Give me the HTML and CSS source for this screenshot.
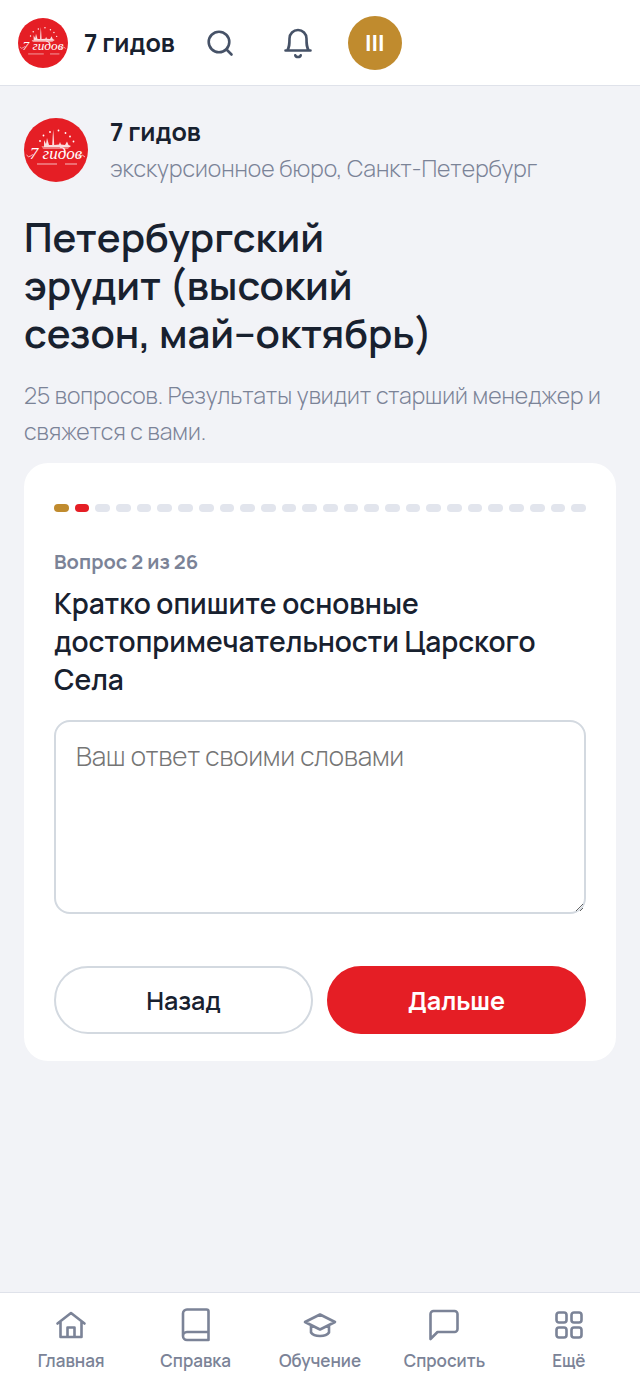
FILE: index.html
```
<!DOCTYPE html>
<html lang="ru">
<head>
<meta charset="UTF-8">
<meta name="viewport" content="width=device-width, initial-scale=1.0">
<title>7 гидов</title>
<link rel="stylesheet" href="styles.css">
</head>
<body>
<svg class="sprite" width="0" height="0" aria-hidden="true">
  <symbol id="logo" viewBox="0 0 64 64">
    <circle cx="32" cy="32" r="32" fill="#e51e25"/>
    <g fill="#fff">
      <circle cx="16" cy="23" r=".9"/>
      <circle cx="19.500" cy="17.500" r=".9"/>
      <circle cx="26" cy="14" r=".9"/>
      <circle cx="34.500" cy="12.500" r=".9"/>
      <circle cx="41.500" cy="15" r=".9"/>
      <circle cx="46" cy="18.500" r=".9"/>
      <circle cx="49.500" cy="23.500" r=".9"/>
      <path d="M28.200 27 28.700 18 29.200 11.500 29.700 18 30.200 27 35 26.500 36 24 37 26.500 41 27 43 23.500 44.500 27 47 28 44 30.500H19L17.500 28.500H20L20 22 22 26 23 20 25 27Z" opacity=".85"/>
    </g>
    <path d="M18 29.500h28" stroke="#e51e25" stroke-width=".5"/>
    <path d="M2.500 37q2 3 4 1t3-1M54 39q2 1 3-1t4 1M13 46h20M41 46h12" fill="none" stroke="#fff" stroke-width=".7"/>
  </symbol>
</svg>

<header class="topbar">
  <a class="brand" href="#">
    <svg class="brand-logo" viewBox="0 0 64 64" aria-hidden="true"><use href="#logo"/><text x="32" y="41" text-anchor="middle" class="logo-text">7 гидов</text></svg>
    <span>7 гидов</span>
  </a>
  <button class="icon-btn" type="button" aria-label="Поиск">
    <svg class="icon" viewBox="0 0 32 32"><circle cx="15" cy="15" r="10.300"/><path d="m22.500 22.500 5 5"/></svg>
  </button>
  <button class="icon-btn" type="button" aria-label="Уведомления">
    <svg class="icon" viewBox="0 0 32 32"><path d="M3.500 23.500h25M5.200 23.500C7.500 20 7.500 17.500 7.500 11.500a8.500 8.500 0 0 1 17 0c0 6 0 8.500 2.300 12M13.300 28.300c.7 2.300 4.700 2.300 5.400 0"/></svg>
  </button>
  <button class="avatar" type="button">III</button>
</header>

<main class="content">
  <div class="company">
    <svg class="company-logo" viewBox="0 0 64 64" aria-hidden="true"><use href="#logo"/><text x="32" y="41" text-anchor="middle" class="logo-text">7 гидов</text></svg>
    <div>
      <div class="company-name">7 гидов</div>
      <div class="company-info">экскурсионное бюро, Санкт-Петербург</div>
    </div>
  </div>

  <h1>Петербургский эрудит (высокий сезон, май–октябрь)</h1>
  <p class="intro">25 вопросов. Результаты увидит старший менеджер и свяжется с вами.</p>

  <form class="card">
    <div class="progress" aria-hidden="true">
      <i class="done"></i><i class="current"></i><i></i><i></i><i></i><i></i><i></i><i></i><i></i><i></i><i></i><i></i><i></i><i></i><i></i><i></i><i></i><i></i><i></i><i></i><i></i><i></i><i></i><i></i><i></i><i></i>
    </div>
    <div class="step">Вопрос 2 из 26</div>
    <label class="question" for="answer">Кратко опишите основные достопримечательности Царского Села</label>
    <textarea id="answer" placeholder="Ваш ответ своими словами"></textarea>
    <div class="actions">
      <button class="btn" type="button">Назад</button>
      <button class="btn btn-primary" type="button">Дальше</button>
    </div>
  </form>
</main>

<nav class="tabbar">
  <a href="#">
    <svg class="icon" viewBox="0 0 32 32"><path d="M2.500 14.500 16 4l13.500 10.500M5.500 12.500V28h21V12.500M12.500 28V18.500h7V28"/></svg>
    Главная
  </a>
  <a href="#">
    <svg class="icon" viewBox="0 0 32 32"><path d="M28.500 31H7a4 4 0 0 1-4-4V4.500a4 4 0 0 1 4-4h19.500a2 2 0 0 1 2 2ZM3 27a4 4 0 0 1 4-4h21.500"/></svg>
    Справка
  </a>
  <a href="#">
    <svg class="icon" viewBox="0 0 32 32"><path d="m1 13 15-7.500L31 13l-15 7.500ZM7 16.500v7c3 4.700 15 4.700 18 0v-7"/></svg>
    Обучение
  </a>
  <a href="#">
    <svg class="icon" viewBox="0 0 32 32"><path d="M2.500 30V5a3 3 0 0 1 3-3h21a3 3 0 0 1 3 3v15a3 3 0 0 1-3 3h-17Z"/></svg>
    Спросить
  </a>
  <a href="#">
    <svg class="icon" viewBox="0 0 32 32"><rect x="3.500" y="3.500" width="10" height="10" rx="2.500"/><rect x="18.500" y="3.500" width="10" height="10" rx="2.500"/><rect x="3.500" y="18.500" width="10" height="10" rx="2.500"/><rect x="18.500" y="18.500" width="10" height="10" rx="2.500"/></svg>
    Ещё
  </a>
</nav>
</body>
</html>
```
FILE: styles.css
```
* {
  box-sizing: border-box;
}

body {
  margin: 0;
  min-height: 100vh;
  display: flex;
  flex-direction: column;
  font-family: Manrope, Inter, sans-serif;
  background-color: #f2f3f7;
  color: #18212f;
}

button,
textarea {
  font-family: inherit;
  color: inherit;
}

a {
  color: inherit;
  text-decoration: none;
}

.sprite {
  position: absolute;
}

.logo-text {
  font: italic 17px "Liberation Serif", serif;
  fill: #fff;
}

.icon {
  width: 32px;
  height: 32px;
  overflow: visible;
  fill: none;
  stroke: currentColor;
  stroke-width: 2.6;
  stroke-linecap: round;
  stroke-linejoin: round;
}

.topbar {
  display: flex;
  align-items: center;
  height: 86px;
  padding: 0 18px;
  background-color: #fff;
  border-bottom: 1px solid #dfe2ea;
}

.brand {
  display: flex;
  align-items: center;
  gap: 16px;
  margin-right: 6px;
  font-size: 25px;
  font-weight: 700;
}

.brand-logo {
  width: 50px;
  height: 50px;
}

.icon-btn {
  display: grid;
  place-items: center;
  width: 78px;
  height: 64px;
  padding: 0;
  border: 0;
  background: none;
  color: #465267;
}

.avatar {
  width: 54px;
  height: 54px;
  margin-left: 11px;
  padding: 0;
  border: 0;
  border-radius: 50%;
  background-color: #c08b2e;
  color: #fff;
  font-size: 22px;
  font-weight: 800;
}

.content {
  flex: 1;
  padding: 28px 24px;
}

.company {
  display: flex;
  align-items: center;
  gap: 22px;
}

.company-logo {
  width: 64px;
  height: 64px;
}

.company-name {
  font-size: 25px;
  font-weight: 700;
  line-height: 36px;
}

.company-info {
  font-size: 23px;
  font-weight: 300;
  line-height: 36px;
  color: #7b8397;
}

h1 {
  max-width: 440px;
  margin: 27px 0 20px;
  font-size: 40px;
  font-weight: 600;
  line-height: 48px;
}

.intro {
  margin: 0 0 14px;
  font-size: 23px;
  font-weight: 300;
  line-height: 36px;
  color: #7b8397;
}

.card {
  padding: 41px 30px 27px;
  border-radius: 24px;
  background-color: #fff;
}

.progress {
  display: flex;
  gap: 6px;
}

.progress i {
  flex: 1;
  height: 8px;
  border-radius: 4px;
  background-color: #e2e5ed;
}

.progress .done {
  background-color: #c08b2e;
}

.progress .current {
  background-color: #e51e25;
}

.step {
  margin: 36px 0 8px;
  font-size: 20px;
  font-weight: 700;
  line-height: 28px;
  color: #7b8397;
}

.question {
  display: block;
  margin-bottom: 22px;
  font-size: 28px;
  font-weight: 600;
  line-height: 38px;
}

textarea {
  display: block;
  width: 100%;
  height: 194px;
  padding: 16px 20px;
  border: 2px solid #d3d9e0;
  border-radius: 16px;
  background-color: #fff;
  font-size: 26px;
  font-weight: 300;
  line-height: 36px;
  resize: vertical;
}

.actions {
  display: flex;
  gap: 14px;
  margin-top: 52px;
}

.btn {
  flex: 1;
  height: 68px;
  border: 2px solid #d3d9e0;
  border-radius: 34px;
  background-color: #fff;
  font-size: 25px;
  font-weight: 600;
}

.btn-primary {
  border-color: #e51e25;
  background-color: #e51e25;
  color: #fff;
  font-weight: 700;
}

.tabbar {
  display: flex;
  position: sticky;
  bottom: 0;
  padding: 16px 9px 14px;
  background-color: #fff;
  border-top: 1px solid #dfe2ea;
}

.tabbar a {
  flex: 1;
  display: flex;
  flex-direction: column;
  align-items: center;
  gap: 8px;
  font-size: 17px;
  font-weight: 600;
  line-height: 24px;
  color: #7b8397;
}
```
